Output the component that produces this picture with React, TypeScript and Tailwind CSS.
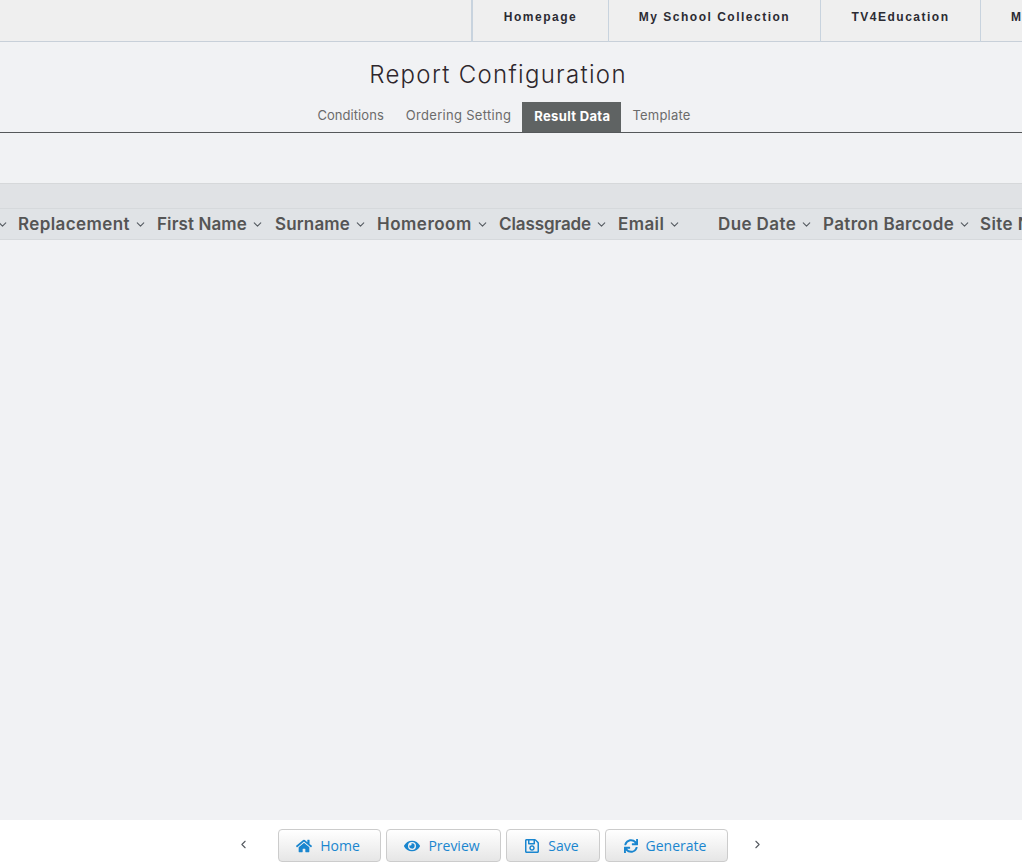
import { FaHome, FaEye, FaRegSave, FaSync } from "react-icons/fa"
import { ChevronDown, ChevronLeft, ChevronRight } from "lucide-react"

const navItems = [
  { label: "Homepage", width: "w-[137px]" },
  { label: "My School Collection", width: "w-[212px]" },
  { label: "TV4Education", width: "w-[160px]" },
]

const columns = [
  { label: "Replacement", width: "w-[139px]", tracking: "tracking-[0.4px]" },
  { label: "First Name", width: "w-[118px]", tracking: "tracking-[0.1px]" },
  { label: "Surname", width: "w-[102px]", tracking: "tracking-[0.15px]" },
  { label: "Homeroom", width: "w-[122px]", tracking: "tracking-[0.5px]" },
  { label: "Classgrade", width: "w-[119px]", tracking: "tracking-[-0.1px]" },
  { label: "Email", width: "w-[100px]", tracking: "tracking-[0.4px]" },
  { label: "Due Date", width: "w-[105px]", tracking: "tracking-[0.4px]" },
  { label: "Patron Barcode", width: "w-[157px]", tracking: "tracking-[0.35px]" },
]

const buttons = [
  { label: "Home", icon: <FaHome className="h-[16px] w-[16px]" />, width: "w-[103px]" },
  { label: "Preview", icon: <FaEye className="h-[16px] w-[16px]" />, width: "w-[115px]" },
  { label: "Save", icon: <FaRegSave className="h-[16px] w-[16px]" />, width: "w-[94px]" },
  { label: "Generate", icon: <FaSync className="h-[14px] w-[14px]" />, width: "w-[123px]" },
]

export default function App() {
  return (
    <div className="flex h-[867px] w-[1022px] flex-col overflow-hidden bg-[#f1f2f4] font-['Inter',sans-serif]">
      <div className="flex h-[42px] shrink-0 border-b border-[#c8d0d9] bg-[#efefef] pl-[471px] font-['Liberation_Sans',sans-serif] text-[12px] font-bold tracking-[1.5px] text-[#2b2b33]">
        {navItems.map((item, i) => (
          <div
            key={item.label}
            className={`-mb-px flex shrink-0 items-center justify-center border-[#c8d3de] pb-[8px] ${item.width} ${i === 0 ? "border-l-2" : "border-l"}`}
          >
            {item.label}
          </div>
        ))}
        <div className="-mb-px w-[60px] shrink-0 border-l border-[#c8d3de] pl-[30px] leading-[34px]">My</div>
      </div>

      <h1 className="mt-[17px] ml-[-26px] text-center text-[24px] leading-[32px] font-light tracking-[1.3px] text-[#2e272c]">
        Report Configuration
      </h1>

      <div className="mt-[11px] flex h-[31px] shrink-0 justify-center border-b border-[#55585a] text-[13px] text-[#6b6b6b]">
        <div className="ml-[-14px] flex">
          <div className="flex h-[27px] items-center px-[11px] tracking-[0.05px]">Conditions</div>
          <div className="flex h-[27px] items-center px-[11px] tracking-[0.3px]">Ordering Setting</div>
          <div className="flex h-[30px] items-center bg-[#5f6363] pr-[11px] pb-[1px] pl-[12px] font-bold tracking-[0.35px] text-white">
            Result Data
          </div>
          <div className="flex h-[27px] items-center pr-[11px] pl-[11px] tracking-[0.2px]">Template</div>
        </div>
      </div>

      <div className="mt-[50px] h-[25px] shrink-0 border-t border-[#d6d8da] bg-[#e0e2e5]" />
      <div className="flex h-[32px] shrink-0 items-center overflow-hidden border-y border-[#d6d9dc] bg-[#e0e3e6] pt-[1px] text-[17px] font-semibold whitespace-nowrap text-[#555555]">
        <div className="flex w-[18px] shrink-0 items-center">
          <ChevronDown className="ml-[-4px] h-[13px] w-[13px] text-[#565c62]" />
        </div>
        {columns.map((col) => (
          <div key={col.label} className={`flex shrink-0 items-center gap-[4px] ${col.width} ${col.tracking}`}>
            {col.label}
            <ChevronDown className="h-[13px] w-[13px] text-[#565c62]" />
          </div>
        ))}
        <div className="shrink-0 tracking-[0.4px]">Site N</div>
      </div>

      <div className="flex-1" />

      <div className="flex h-[47px] shrink-0 items-start bg-white pl-[237px] font-['Open_Sans',sans-serif] text-[14px] text-[#1a86cf]">
        <ChevronLeft className="mt-[18px] h-[13px] w-[13px] text-[#555a60]" />
        <div className="ml-[28px] mt-[9px] flex gap-[5px]">
          {buttons.map((b) => (
            <div
              key={b.label}
              className={`flex h-[33px] items-center justify-center gap-[8px] rounded-[4px] border border-[#cccccc] bg-gradient-to-b from-white to-[#e6e6e6] pr-[3px] ${b.width}`}
            >
              {b.icon}
              {b.label}
            </div>
          ))}
        </div>
        <ChevronRight className="ml-[23px] mt-[18px] h-[13px] w-[13px] text-[#555a60]" />
      </div>
    </div>
  )
}
